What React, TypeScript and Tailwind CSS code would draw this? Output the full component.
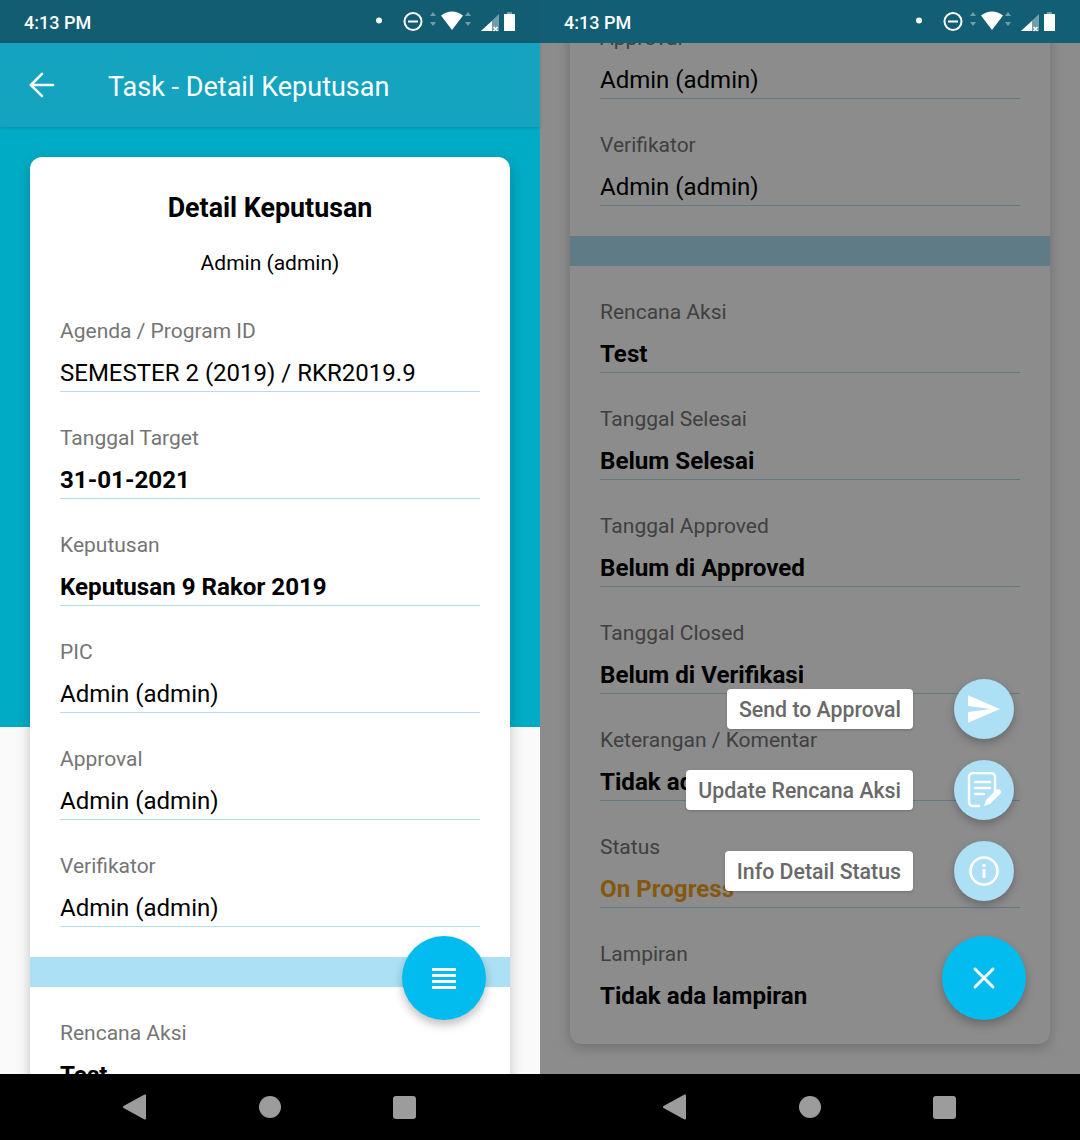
import { ArrowLeft, X } from 'lucide-react';

type FieldData = {
  label: string;
  value: string;
  bold?: boolean;
  orange?: boolean;
  noLine?: boolean;
};

const topFields: FieldData[] = [
  { label: 'Agenda / Program ID', value: 'SEMESTER 2 (2019) / RKR2019.9' },
  { label: 'Tanggal Target', value: '31-01-2021', bold: true },
  { label: 'Keputusan', value: 'Keputusan 9 Rakor 2019', bold: true },
  { label: 'PIC', value: 'Admin (admin)' },
  { label: 'Approval', value: 'Admin (admin)' },
  { label: 'Verifikator', value: 'Admin (admin)' },
];

const bottomFields: FieldData[] = [
  { label: 'Rencana Aksi', value: 'Test', bold: true },
  { label: 'Tanggal Selesai', value: 'Belum Selesai', bold: true },
  { label: 'Tanggal Approved', value: 'Belum di Approved', bold: true },
  { label: 'Tanggal Closed', value: 'Belum di Verifikasi', bold: true },
  { label: 'Keterangan / Komentar', value: 'Tidak ada komentar', bold: true },
  { label: 'Status', value: 'On Progress', bold: true, orange: true },
  { label: 'Lampiran', value: 'Tidak ada lampiran', bold: true, noLine: true },
];

function StatusBar({ color }: { color: string }) {
  return (
    <div className={`h-[43px] shrink-0 flex items-center justify-between pl-6 pr-5 ${color}`}>
      <span className="pt-0.5 text-[18px] font-medium text-white">4:13 PM</span>
      {/* Status icons */}
      <svg width="150" height="25" viewBox="370 10 150 25">
        <circle cx="379" cy="21.5" r="3" fill="#fff" />
        <circle cx="413" cy="22.5" r="8.5" fill="none" stroke="#fff" strokeWidth="2" />
        <rect x="408" y="21.5" width="10" height="2" fill="#fff" />
        <path d="M433 13l3 4h-6zM433 27l3-4h-6z" fill="#fff" fillOpacity="0.4" />
        <path d="M441 16.5Q452 8.5 463 16.5L452 31z" fill="#fff" />
        <path d="M468 13l3 4h-6zM468 27l3-4h-6z" fill="#fff" fillOpacity="0.4" />
        <path d="M481 32L499 15v17z" fill="#fff" fillOpacity="0.4" />
        <path d="M481 32l11-10v10z" fill="#fff" />
        <path d="M493.500 28l4 4M497.500 28l-4 4" stroke="#fff" strokeWidth="1.4" />
        <rect x="507" y="13" width="5" height="3" fill="#fff" fillOpacity="0.4" />
        <rect x="504" y="15" width="11" height="17" fill="#fff" />
      </svg>
    </div>
  );
}

function NavBar() {
  return (
    <div className="h-[66px] shrink-0 bg-black flex items-center justify-between pl-[122px] pr-[124px]">
      <svg width="24" height="26" viewBox="0 0 24 26">
        <path d="M23 1.500v23L2 13z" fill="#9c9c9c" stroke="#9c9c9c" strokeWidth="2" strokeLinejoin="round" />
      </svg>
      <div className="w-[22px] h-[22px] rounded-full bg-[#9c9c9c]" />
      <div className="w-[23px] h-[23px] rounded-[3px] bg-[#9c9c9c]" />
    </div>
  );
}

function Field({ label, value, bold, orange, noLine }: FieldData) {
  return (
    <div className={noLine ? 'mb-[30px]' : 'mb-8'}>
      <div className="h-7 leading-7 text-[21px] text-[#757575]">{label}</div>
      <div
        className={`mt-2.5 h-9 leading-9 whitespace-nowrap ${bold ? 'text-[24.15px] font-bold' : 'text-[24px]'} ${
          orange ? 'text-[#f2a01e]' : 'text-black'
        } ${noLine ? '' : 'box-content border-b border-[#b4dfe8]'}`}
      >
        {value}
      </div>
    </div>
  );
}

function DetailCard() {
  return (
    <div className="bg-white rounded-xl shadow-[0_4px_14px_rgba(0,0,0,0.22)] pt-8">
      <h2 className="h-9 leading-[38px] text-center text-[26.8px] font-bold text-black">Detail Keputusan</h2>
      <p className="mt-[23px] h-[30px] leading-[30px] text-center text-[21px] text-black">Admin (admin)</p>
      <div className="px-[30px] pt-[39px]">
        {topFields.map((f) => (
          <Field key={f.label} {...f} />
        ))}
      </div>
      <div className="h-[30px] mb-8 -mt-0.5 bg-[#ace0f5]" />
      <div className="px-[30px] flow-root">
        {bottomFields.map((f) => (
          <Field key={f.label} {...f} />
        ))}
      </div>
    </div>
  );
}

function MenuFab() {
  return (
    <button className="absolute right-[54px] bottom-[54px] w-[84px] h-[84px] rounded-full bg-[#03bcef] shadow-[0_5px_10px_rgba(0,0,0,0.25)] flex flex-col items-center justify-center gap-[3px]">
      <span className="w-6 h-[3px] bg-white" />
      <span className="w-6 h-[3px] bg-white" />
      <span className="w-6 h-[3px] bg-white" />
      <span className="w-6 h-[3px] bg-white" />
    </button>
  );
}

function SendIcon() {
  return (
    <svg width="32" height="28" viewBox="2 3 21 18">
      <path d="M2 21l21-9L2 3v7l15 2-15 2z" fill="#fff" />
    </svg>
  );
}

function NoteIcon() {
  return (
    <svg width="34" height="36" viewBox="0 0 34 36" fill="none" stroke="#fff" strokeWidth="2.4" strokeLinecap="round" strokeLinejoin="round">
      <path d="M12 34H6a4 4 0 0 1-4-4V5a4 4 0 0 1 4-4h18a4 4 0 0 1 4 4v15" />
      <path d="M8 10h15M8 16h15M8 22h9" />
      <path d="M17 34l2-6 10-10a2.500 2.500 0 0 1 4 4L23 32z" fill="#fff" stroke="none" />
    </svg>
  );
}

function InfoIcon() {
  return (
    <svg width="32" height="32" viewBox="0 0 32 32" fill="none">
      <circle cx="16" cy="16" r="13.500" stroke="#fff" strokeWidth="2.600" />
      <rect x="14.500" y="14" width="3" height="9" fill="#fff" />
      <rect x="14.500" y="9" width="3" height="3" fill="#fff" />
    </svg>
  );
}

const actions = [
  { label: 'Send to Approval', icon: <SendIcon /> },
  { label: 'Update Rencana Aksi', icon: <NoteIcon /> },
  { label: 'Info Detail Status', icon: <InfoIcon /> },
];

function ActionMenu() {
  return (
    <div className="absolute right-[54px] bottom-[54px] flex flex-col items-end">
      <div className="flex flex-col gap-[21px] pr-3 mb-[35px]">
        {actions.map((a) => (
          <div key={a.label} className="flex items-center justify-end gap-[41px]">
            <span className="h-10 leading-[41px] px-3 rounded-[4px] bg-white text-[21.3px] font-medium text-[#696969] shadow-[0_1px_3px_rgba(0,0,0,0.2)]">
              {a.label}
            </span>
            <span className="w-[60px] h-[60px] rounded-full bg-[#addff5] shadow-[0_4px_8px_rgba(0,0,0,0.25)] flex items-center justify-center">
              {a.icon}
            </span>
          </div>
        ))}
      </div>
      <button className="w-[84px] h-[84px] rounded-full bg-[#03bcef] shadow-[0_5px_10px_rgba(0,0,0,0.25)] flex items-center justify-center">
        <X size={36} color="#fff" strokeWidth={2} />
      </button>
    </div>
  );
}

export default function App() {
  return (
    <div className="w-[1080px] h-[1140px] grid grid-cols-2 font-['Roboto',sans-serif] overflow-hidden">
      {/* Left: detail screen */}
      <div className="flex flex-col h-[1140px] bg-[#fafafa]">
        <StatusBar color="bg-[#135d73]" />
        <div className="h-[84px] shrink-0 bg-[#14a4bf] shadow-[0_1px_3px_rgba(0,0,0,0.15)] z-10 flex items-center">
          <ArrowLeft className="ml-[23px]" size={38} color="#fff" strokeWidth={1.6} />
          <span className="ml-[47px] pt-1 text-[27px] text-white">Task - Detail Keputusan</span>
        </div>
        <div className="relative flex-1 overflow-hidden bg-[linear-gradient(#00acc5_600px,#fafafa_600px)]">
          <div className="px-[30px] pt-[30px]">
            <DetailCard />
          </div>
          <MenuFab />
        </div>
        <NavBar />
      </div>

      {/* Right: same screen scrolled, menu open */}
      <div className="flex flex-col h-[1140px] bg-white">
        <StatusBar color="bg-[#125e75]" />
        <div className="relative flex-1 overflow-hidden">
          <div className="px-[30px] mt-[-607px]">
            <DetailCard />
          </div>
          <div className="absolute inset-0 bg-black/45" />
          <ActionMenu />
        </div>
        <NavBar />
      </div>
    </div>
  );
}
